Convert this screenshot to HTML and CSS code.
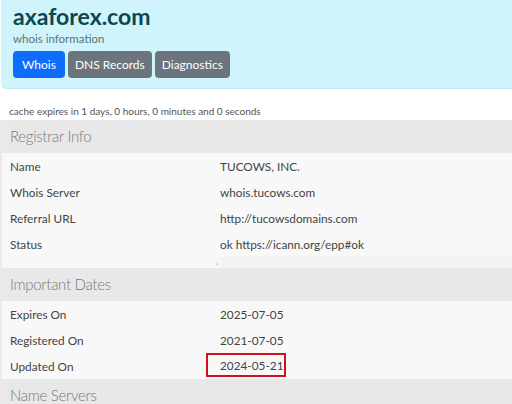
FILE: index.html
```html
<!DOCTYPE html>
<html lang="en">
<head>
    <meta charset="UTF-8">
    <meta name="viewport" content="width=device-width, initial-scale=1.0">
    <title>axaforex.com whois</title>
    <link rel="stylesheet" href="styles.css">
</head>
<body>
    <!-- Header -->
    <div class="hero">
        <h1>axaforex.com</h1>
        <p class="sub">whois information</p>
        <div class="tabs">
            <button class="btn btn-primary">Whois</button>
            <button class="btn">DNS Records</button>
            <button class="btn">Diagnostics</button>
        </div>
    </div>

    <p class="cache">cache expires in 1 days, 0 hours, 0 minutes and 0 seconds</p>

    <!-- Tables -->
    <div class="panel">
        <div class="section">Registrar Info</div>
        <div class="row"><span class="key">Name</span><span class="val">TUCOWS, INC.</span></div>
        <div class="row"><span class="key">Whois Server</span><span class="val">whois.tucows.com</span></div>
        <div class="row"><span class="key">Referral URL</span><span class="val">http://tucowsdomains.com</span></div>
        <div class="row"><span class="key">Status</span><span class="val">ok https://icann.org/epp#ok</span></div>
        <div class="row row-tail"><span class="key"></span><span class="val"><span class="tick">‹</span></span></div>

        <div class="section">Important Dates</div>
        <div class="row"><span class="key">Expires On</span><span class="val">2025-07-05</span></div>
        <div class="row"><span class="key">Registered On</span><span class="val">2021-07-05</span></div>
        <div class="row"><span class="key">Updated On</span><span class="val"><span class="mark">2024-05-21</span></span></div>

        <div class="section">Name Servers</div>
    </div>
</body>
</html>
```

FILE: styles.css
```css
body {
    margin: 0;
    font-family: 'Lato', sans-serif;
    background: #fff;
    color: #333;
    overflow: hidden;
}

/* Header */
.hero {
    background: #cff4fc;
    border-bottom: 1px solid #bfe9f2;
    border-bottom-left-radius: 6px;
    margin-left: 1px;
    padding: 2px 12px 11px;
    height: 75px;
}

.hero h1 {
    margin: 0;
    font-size: 23px;
    font-weight: 700;
    color: #0b4752;
    line-height: 28px;
}

.sub {
    margin: 1px 0 0;
    font-size: 11.5px;
    color: #5b7378;
    line-height: 16px;
}

.tabs {
    display: flex;
    gap: 3px;
    margin-top: 4px;
}

.btn {
    font-family: inherit;
    font-size: 12px;
    color: #fff;
    background: #6c757d;
    border: none;
    border-radius: 4px;
    padding: 0 7px;
    height: 27px;
}

.btn-primary {
    background: #0d6efd;
    padding: 0 9px;
}

.cache {
    margin: 0;
    padding: 16px 9px 2px;
    font-size: 10px;
    color: #555;
    line-height: 13px;
}

/* Panel */
.panel {
    border-left: 2px solid #eaeaea;
}

.section {
    background: #e8e8e8;
    color: #7a7a7a;
    font-size: 15px;
    font-weight: 300;
    letter-spacing: -0.3px;
    height: 33px;
    line-height: 33px;
    padding-left: 8px;
}

.row {
    display: flex;
    background: #f8f8f8;
    height: 26px;
    line-height: 28px;
    font-size: 11.8px;
    color: #444;
}

.key {
    width: 210px;
    padding-left: 8px;
}

.val {
    flex: 1;
}

.row-tail {
    height: 11px;
    line-height: 10px;
}

.row-tail .val {
    background: #f3f3f3;
}

.tick {
    font-size: 8px;
    color: #999;
    margin-left: -4px;
}

.mark {
    display: inline-block;
    vertical-align: top;
    border: 2px solid #d0101e;
    padding: 0 0 0 12px;
    margin-left: -14px;
    height: 20px;
    line-height: 22px;
}
```
